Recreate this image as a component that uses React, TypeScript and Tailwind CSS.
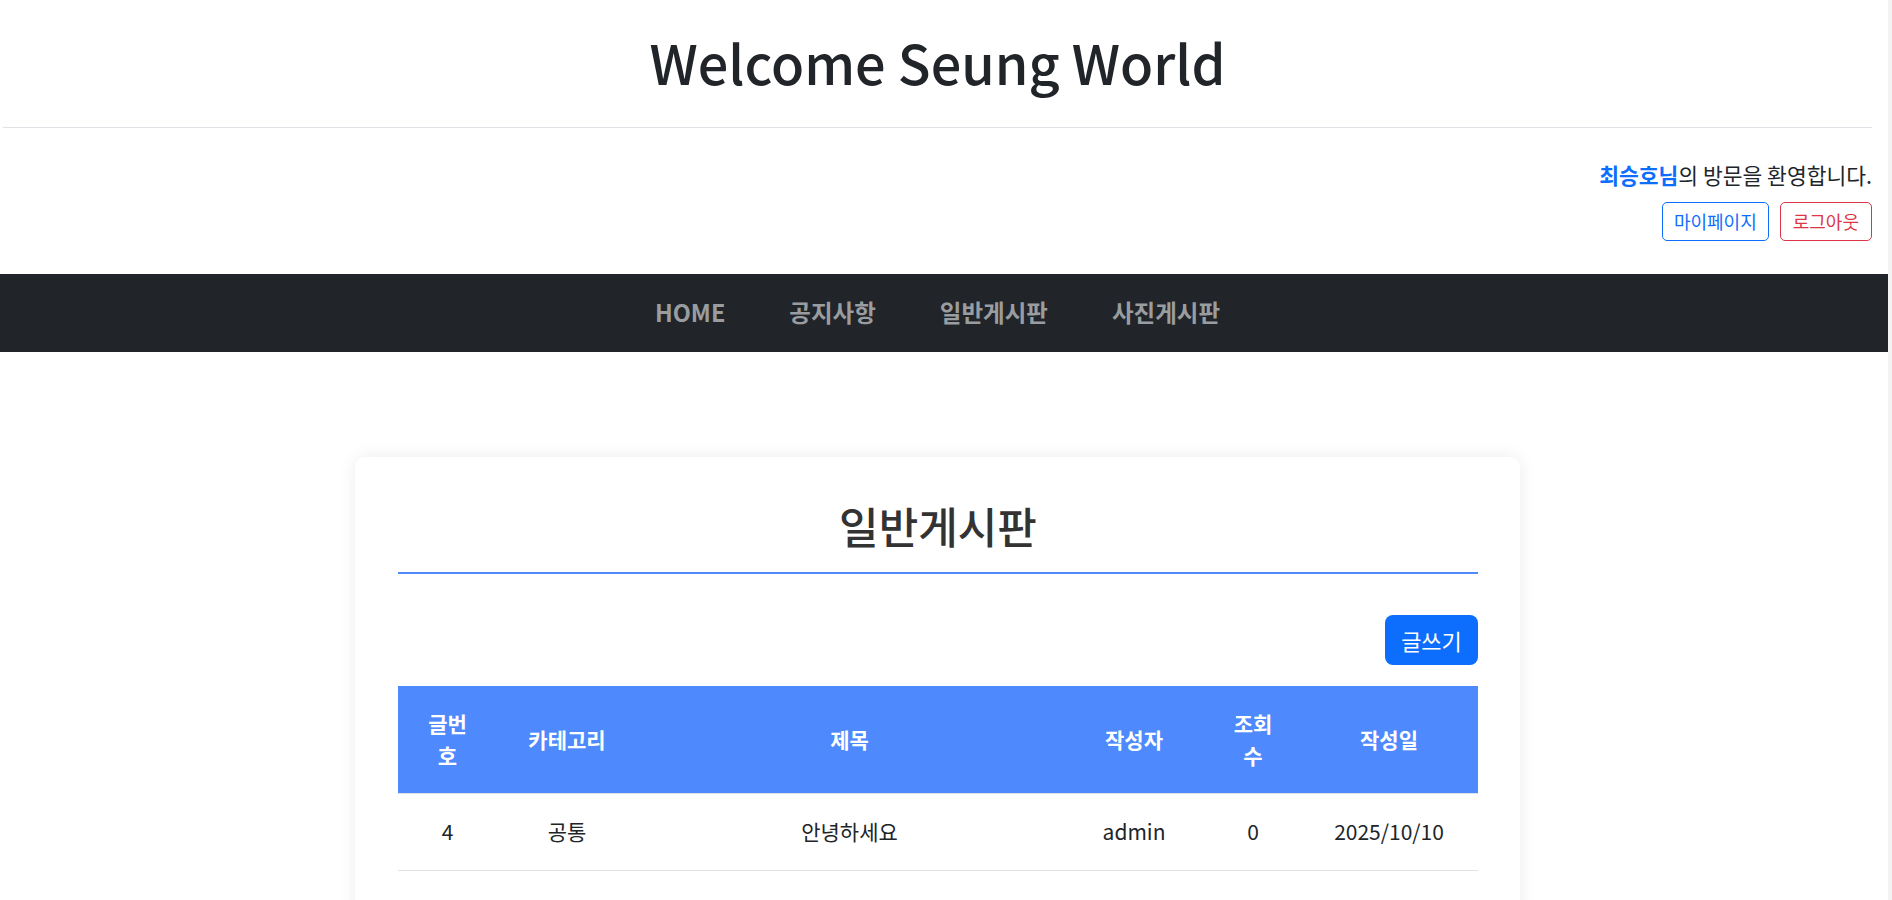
import React from "react";

const font = { fontFamily: '"Noto Sans CJK KR", "Noto Sans", sans-serif' };

const rows = [
  { no: "4", cat: "공통", title: "안녕하세요", writer: "admin", views: "0", date: "2025/10/10" },
  { no: "3", cat: "공통", title: "123", writer: "admin", views: "0", date: "2025/10/10" },
];

export default function App() {
  return (
    <div className="flex w-[1892px] min-h-[900px] bg-white text-[#212529]" style={font}>
      <div className="w-[1888px] flex flex-col">
        <header className="w-[1875px]">
          <div className="mx-[3px] border-b border-[#dee2e6] pt-[26px] pb-[29px]">
            <h1 className="text-center text-[54px] leading-[72px] font-medium text-[#212529]">Welcome Seung World</h1>
          </div>
          <div className="mr-[3px] pt-[32px] flex flex-col items-end">
            <p className="text-[21.5px] leading-[30px]">
              <span className="font-bold text-[#0d6efd]">최승호님</span>의 방문을 환영합니다.
            </p>
            <div className="mt-[12px] flex gap-[11px]">
              <button className="h-[39px] px-[11px] text-[18px] rounded-[5px] border border-[#0d6efd] text-[#0d6efd] bg-white">마이페이지</button>
              <button className="h-[39px] px-[12px] text-[18px] rounded-[5px] border border-[#dc3545] text-[#dc3545] bg-white">로그아웃</button>
            </div>
          </div>
        </header>
        <nav className="mt-[33px] h-[78px] w-[1888px] bg-[#212529]">
          <div className="w-[1875px] h-full flex items-center justify-center gap-[44px]">
            {["HOME", "공지사항", "일반게시판", "사진게시판"].map((t) => (
              <a key={t} className="px-[10px] text-[23.5px] font-bold text-[#9a9da0]">{t}</a>
            ))}
          </div>
        </nav>
        <main className="w-[1875px] pt-[105px] flex justify-center">
          <div className="w-[1165px] rounded-[10px] bg-white shadow-[0_0_18px_rgba(0,0,0,0.08)] pl-[43px] pr-[42px] pt-[42px] pb-[60px]">
            <h2 className="text-center text-[43px] leading-[52px] font-medium text-[#333333] pb-[21px] border-b-2 border-[#4e89fd]">일반게시판</h2>
            <div className="mt-[41px] flex justify-end">
              <button className="h-[50px] w-[93px] rounded-[8px] bg-[#0d6efd] text-white text-[22px]">글쓰기</button>
            </div>
            <table className="mt-[21px] w-full table-fixed border-collapse text-[21px] leading-[31.5px]">
              <colgroup>
                <col className="w-[99px]" />
                <col className="w-[140px]" />
                <col className="w-[425px]" />
                <col className="w-[144px]" />
                <col className="w-[94px]" />
                <col className="w-[178px]" />
              </colgroup>
              <thead>
                <tr className="bg-[#4e89fd] text-white">
                  {["글번호", "카테고리", "제목", "작성자", "조회수", "작성일"].map((h) => (
                    <th key={h} className="px-[22px] py-[22px] font-bold text-center align-middle border-b border-[#dee2e6]">{h}</th>
                  ))}
                </tr>
              </thead>
              <tbody>
                {rows.map((r, i) => (
                  <tr key={i} className="border-b border-[#dee2e6]">
                    <td className="px-[22px] py-[22px] text-center">{r.no}</td>
                    <td className="px-[22px] py-[22px] text-center">{r.cat}</td>
                    <td className="px-[22px] py-[22px] text-center">{r.title}</td>
                    <td className="px-[22px] py-[22px] text-center">{r.writer}</td>
                    <td className="px-[22px] py-[22px] text-center">{r.views}</td>
                    <td className="px-[22px] py-[22px] text-center">{r.date}</td>
                  </tr>
                ))}
              </tbody>
            </table>
          </div>
        </main>
      </div>
      <div className="w-[4px] bg-[#f3f3f3]" />
    </div>
  );
}
